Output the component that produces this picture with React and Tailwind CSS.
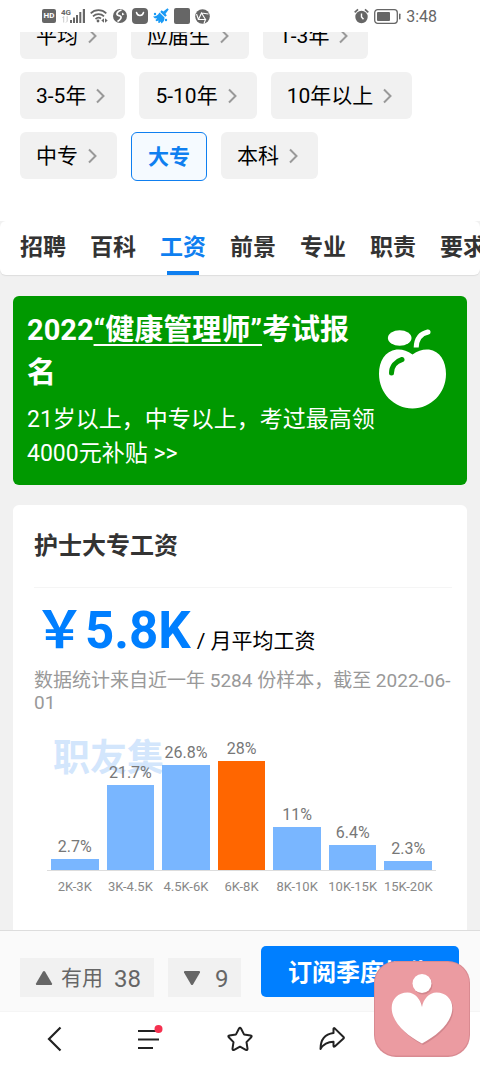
import React from "react";

const filters = [
  "平均",
  "应届生",
  "1-3年",
  "3-5年",
  "5-10年",
  "10年以上",
  "中专",
  "大专",
  "本科",
];
const activeFilter = "大专";

const tabs = ["招聘", "百科", "工资", "前景", "专业", "职责", "要求"];
const activeTab = "工资";

const salaries = [
  { range: "2K-3K", share: 2.7 },
  { range: "3K-4.5K", share: 21.7 },
  { range: "4.5K-6K", share: 26.8 },
  { range: "6K-8K", share: 28, top: true },
  { range: "8K-10K", share: 11 },
  { range: "10K-15K", share: 6.4 },
  { range: "15K-20K", share: 2.3 },
];

function StatusBar() {
  return (
    <header className="sticky top-0 z-20 flex h-8 shrink-0 items-center justify-between bg-white pl-[42px] pr-[43px] text-[#666]">
      <div className="flex items-center gap-[5px]">
        <span className="flex h-[14px] w-[14px] items-center justify-center rounded-[2px] bg-[#666] text-[8px] font-bold leading-none text-white">
          HD
        </span>
        <svg width="24" height="16" viewBox="0 0 24 16" fill="currentColor">
          <text x="0" y="7" fontSize="8" fontWeight="700" fontFamily="Roboto">4G</text>
          <path d="M1.500 10l1.200-1.500v6M5 14.500l1.200-1.300v-5" stroke="#bbb" strokeWidth="0.800" fill="none" />
          <path d="M9 12h2v3H9zM12 9.500h2V15h-2zM15 7h2v8h-2zM18.300 4h2v11h-2zM21.800 1H24v14h-2.200z" />
        </svg>
        <svg width="18" height="16" viewBox="0 0 18 16" fill="none" stroke="currentColor" strokeWidth="1.700">
          <path d="M.7 5.300C5 1 12 1 16.300 5.300M3 8.300c3-3 8-3 11 0M5.500 11c1.700-1.500 3.900-1.600 5.500-.5" />
          <circle cx="8" cy="13" r="1.400" fill="currentColor" stroke="none" />
          <path d="M14 10.300v4.400l-2.700-2.200zM15 10.300v4.400l2.700-2.200z" fill="currentColor" stroke="none" />
        </svg>
        <svg width="14" height="14" viewBox="0 0 14 14">
          <circle cx="7" cy="7" r="7" fill="currentColor" />
          <path d="M8.500 1C5 2 3.500 4 4 5.500s3.500.8 4 2.300c.4 1.500-1.200 3.300-3.500 4.600" fill="none" stroke="#fff" strokeWidth="1.700" />
          <path d="M9 3.500l2.500 1.800L9 6.500z" fill="#fff" />
        </svg>
        <svg width="16" height="16" viewBox="0 0 16 16">
          <rect x="0" y="0" width="16" height="16" rx="4" fill="currentColor" />
          <path d="M4.500 4.500c1 4 6 4 7 0" fill="none" stroke="#fff" strokeWidth="1.500" strokeLinecap="round" />
        </svg>
        <svg width="16" height="16" viewBox="0 0 16 16" fill="#1a9af5">
          <path d="M14.500.300l1.200 1.200-3.200 4.200 1.300 1.900-1.600 1.200-4.900-4.900 1.200-1.600 1.900 1.300zM6.500 4.600l5 5c.2 2.500-1 4.600-3 6l-1-2-1 1.500-1.500-.6.600-2-2.200.8-1-1.300 1.800-1.500-2.500-.2L0 8.500c2.500.2 5-.9 6.500-3.900z" />
          <circle cx="2" cy="6" r="1.200" />
          <circle cx="13" cy="12" r="1.200" />
        </svg>
        <span className="h-4 w-4 rounded-[2px] bg-[#666]" />
        <svg width="15" height="15" viewBox="0 0 15 15">
          <circle cx="7.500" cy="7.500" r="7.300" fill="currentColor" />
          <path d="M6.500 4l4 6.500H3.500zM6.500 4L13.500 5M3.500 10.500L1.500 5M10.500 10.500L9 14.500" fill="none" stroke="#fff" strokeWidth="1.100" />
        </svg>
      </div>
      <div className="flex items-center gap-[5px]">
        <svg width="15" height="16" viewBox="0 0 15 16" fill="none" stroke="currentColor">
          <circle cx="7.500" cy="9" r="6.200" fill="currentColor" stroke="none" />
          <path d="M.7 4.300L4 1.300M14.300 4.300L11 1.300" strokeWidth="1.700" />
          <path d="M7.500 5.500V9l2 2.300" stroke="#fff" strokeWidth="1.400" />
        </svg>
        <svg width="27" height="15" viewBox="0 0 27 15">
          <rect x=".7" y=".7" width="22.600" height="13.600" rx="3" fill="none" stroke="currentColor" strokeWidth="1.300" />
          <rect x="3" y="3" width="13" height="9" rx="1" fill="currentColor" />
          <rect x="25" y="4.500" width="1.500" height="6" rx=".7" fill="currentColor" />
        </svg>
        <span className="pt-[2px] text-[16px] leading-none">3:48</span>
      </div>
    </header>
  );
}

function Filters() {
  return (
    <section className="overflow-hidden bg-white">
      <div className="-mt-5 flex flex-wrap items-start gap-x-[14px] gap-y-[13px] px-5 pb-10">
        {filters.map((label) =>
          label === activeFilter ? (
            <button
              key={label}
              type="button"
              className="h-[49px] rounded-md border border-[#0f7ff0] bg-[#f5faff] px-4 pt-[2px] text-[21px] font-bold text-[#0f7ff0]"
            >
              {label}
            </button>
          ) : (
            <button
              key={label}
              type="button"
              className="flex h-[47px] items-center gap-[10px] rounded-md bg-[#f1f1f1] pl-4 pr-5 text-[21px] text-black"
            >
              <span className="pt-[2px]">{label}</span>
              <svg width="9" height="16" viewBox="0 0 9 16" fill="none" stroke="#999" strokeWidth="2">
                <path d="M1 1.500L7.500 8 1 14.500" />
              </svg>
            </button>
          )
        )}
      </div>
    </section>
  );
}

function Tabs() {
  return (
    <nav className="flex h-[54px] gap-6 overflow-hidden rounded-md bg-white pl-5 shadow-[0_1px_1px_#dddddd]">
      {tabs.map((label) => (
        <a
          key={label}
          href={"#" + label}
          className={
            label === activeTab
              ? "flex shrink-0 flex-col items-center justify-between pt-1 text-[23px] font-bold text-[#0f7ff0]"
              : "flex shrink-0 flex-col items-center justify-between pt-1 text-[23px] font-bold text-[#333]"
          }
        >
          <span className="leading-[46px]">{label}</span>
          {label === activeTab && <span className="h-1 w-8 shrink-0 bg-[#0f7ff0]" />}
        </a>
      ))}
    </nav>
  );
}

function Banner() {
  return (
    <a
      href="#exam"
      className="flex items-start gap-1 rounded-md bg-[#009900] pb-[14px] pl-[14px] pr-5 pt-[13px] text-white"
    >
      <div className="min-w-0 flex-1">
        <h2 className="text-[29px] font-bold leading-[43px]">
          2022<span className="underline decoration-2 underline-offset-4">“健康管理师”</span>考试报名
        </h2>
        <p className="mt-2 text-[23px] leading-[34px]">21岁以上，中专以上，考过最高领4000元补贴 &gt;&gt;</p>
      </div>
      <svg className="mt-5 shrink-0" width="68" height="80" viewBox="0 0 68 80" fill="none">
        <path
          d="M33.500 25.500C28 21.500 23 20 17.500 20.500C6 22 0 32 0 45C0 64 15 79.500 33.500 79.500S67 64 67 45C67 32 61 22 50 20.500C44 20 39 21.500 33.500 25.500Z"
          fill="#fff"
        />
        <ellipse cx="20.700" cy="9" rx="11.800" ry="7.800" fill="#fff" />
        <path d="M37.200 18.500C37.500 9.500 42 4.500 49 3" stroke="#fff" strokeWidth="5" />
        <circle cx="49" cy="3" r="2.500" fill="#fff" />
        <path d="M12.500 44C12.500 37.500 16.500 32.500 23 30.500" stroke="#009900" strokeWidth="5" strokeLinecap="round" />
      </svg>
    </a>
  );
}

function SalaryChart() {
  return (
    <figure className="relative ml-[13px] mr-4 mt-[23px]" aria-label="工资分布">
      <span className="absolute left-[6px] top-0 text-[37px] font-bold leading-[44px] text-[#d3e6fc]">职友集</span>
      <div className="relative flex h-[134px] items-end border-b border-[#dddddd]">
        {salaries.map(({ range, share, top }) => (
          <div key={range} className="flex flex-1 flex-col items-stretch px-1">
            <span className="text-center text-[16px] leading-6 text-[#777]">
              <span className="-mx-2 block">{share}%</span>
            </span>
            <div className={top ? "bg-[#ff6600]" : "bg-[#79b6ff]"} style={{ height: Math.round(share * 3.9) }} />
          </div>
        ))}
      </div>
      <figcaption className="flex pt-[6px] text-[13px] leading-5 text-[#888]">
        {salaries.map(({ range }) => (
          <span key={range} className="flex-1 whitespace-nowrap text-center">
            {range}
          </span>
        ))}
      </figcaption>
    </figure>
  );
}

function SalaryCard() {
  return (
    <section className="flex-1 rounded-t-md bg-white pb-4 pl-[21px] pr-[15px]">
      <h2 className="border-b border-[#f5f5f5] pb-[23px] pt-[23px] text-[24px] font-bold leading-9 text-[#333]">
        护士大专工资
      </h2>
      <p className="flex items-baseline gap-[6px] pt-[14px] leading-[58px]">
        <strong className="text-[51px] font-bold text-[#007fff]">￥5.8K</strong>
        <span className="text-[21px] text-black">/ 月平均工资</span>
      </p>
      <p className="text-[19px] leading-[22px] text-[#999]">
        数据统计来自近一年 5284 份样本，截至 2022-06-01
      </p>
      <SalaryChart />
    </section>
  );
}

function ActionBar() {
  return (
    <div className="flex h-[81px] items-end border-t border-[#dddddd] bg-[#fafafa] pb-[14px] pl-5 pr-[21px]">
      <button type="button" className="flex h-[39px] w-[134px] items-center bg-[#f1f1f1] pl-[15px] text-[#666]">
        <svg width="18" height="16" viewBox="0 0 18 16" fill="currentColor">
          <path d="M8 1.600q1-1.200 2 0l7 11.900q.6 1.500-1 1.500H2q-1.600 0-1-1.500z" />
        </svg>
        <span className="ml-2 pt-[2px] text-[21px] leading-none">有用</span>
        <span className="ml-[11px] pt-[2px] text-[24px] leading-none">38</span>
      </button>
      <button
        type="button"
        aria-label="没用 9"
        className="ml-[14px] flex h-[39px] w-[73px] items-center bg-[#f1f1f1] pl-[15px] text-[#666]"
      >
        <svg width="18" height="16" viewBox="0 0 18 16" fill="currentColor">
          <path d="M8 14.400q1 1.200 2 0l7-11.900q.6-1.500-1-1.500H2Q.4 1 1 2.500z" />
        </svg>
        <span className="ml-[14px] pt-[2px] text-[24px] leading-none">9</span>
      </button>
      <button
        type="button"
        className="ml-5 h-[51px] flex-1 rounded-[5px] bg-[#007fff] pt-[2px] text-[24px] font-bold text-white"
      >
        订阅季度报告
      </button>
    </div>
  );
}

function BrowserNav() {
  const item = "flex flex-1 items-center justify-center";
  return (
    <nav className="flex h-14 border-t border-[#f5f5f5] bg-white px-[9px] pb-[2px] text-[#222]">
      <button type="button" aria-label="返回" className={item}>
        <svg width="26" height="26" viewBox="0 0 26 26" fill="none" stroke="currentColor" strokeWidth="2.200">
          <path d="M18.500 1.500L7 13l11.500 11.500" />
        </svg>
      </button>
      <button type="button" aria-label="菜单" className={item}>
        <svg width="30" height="28" viewBox="-2 0 30 28" fill="none" stroke="currentColor" strokeWidth="2">
          <path d="M3 6h21M3 14.500h21M3 23h15" />
          <circle cx="23.500" cy="4" r="4" fill="#f5304f" stroke="none" />
        </svg>
      </button>
      <button type="button" aria-label="收藏" className={item}>
        <svg width="26" height="26" viewBox="0 0 26 26" fill="none" stroke="currentColor" strokeWidth="2" strokeLinejoin="round">
          <path d="M12 2.500q1-1.500 2 0l3 5.900 6.600 1q1.800.5.600 1.900l-4.700 4.800 1 6.600q0 1.800-1.700 1.100L13 20.700l-5.800 3.100q-1.700.7-1.700-1.100l1-6.600-4.700-4.800Q.6 9.900 2.400 9.400l6.600-1z" />
        </svg>
      </button>
      <button type="button" aria-label="分享" className={item}>
        <svg width="26" height="26" viewBox="0 0 26 26" fill="none" stroke="currentColor" strokeWidth="2" strokeLinejoin="round">
          <path d="M14.500 2.700q.2-1 1.200-.3L24.500 11q.7.800 0 1.600l-8.800 7.900q-1 .6-1.200-.4v-4.300C8.500 15.800 4.500 18 1.500 23C1.500 14.500 5.500 8.200 14.500 7z" />
        </svg>
      </button>
      <button type="button" aria-label="主页" className={item} />
    </nav>
  );
}

function FloatingApp() {
  return (
    <button type="button" aria-label="爱心助手" className="absolute bottom-[10px] right-[10px]">
      <svg width="96" height="96" viewBox="0 0 96 96">
        <rect x="0" y="0" width="96" height="96" rx="22" fill="#d98a91" />
        <rect x="1" y="1" width="94" height="93.500" rx="21" fill="#eb9ba1" />
        <g fill="#d2868d" transform="translate(1 1.500)">
          <circle cx="48" cy="22.500" r="9.500" />
          <path d="M48 46C46.500 38 41 31.500 33.500 31.500C24 31.500 17.700 38 17.700 47C17.700 61 32 74 48 82.500C64 74 78.300 61 78.300 47C78.300 38 72 31.500 62.500 31.500C55 31.500 49.500 38 48 46Z" />
        </g>
        <g fill="#fff">
          <circle cx="48" cy="22.500" r="9.500" />
          <path d="M48 46C46.500 38 41 31.500 33.500 31.500C24 31.500 17.700 38 17.700 47C17.700 61 32 74 48 82.500C64 74 78.300 61 78.300 47C78.300 38 72 31.500 62.500 31.500C55 31.500 49.500 38 48 46Z" />
        </g>
      </svg>
    </button>
  );
}

export default function App() {
  return (
    <div className="flex min-h-screen flex-col bg-[#f1f1f1] font-['Roboto','Noto_Sans_CJK_SC',sans-serif]">
      <StatusBar />
      <Filters />
      <Tabs />
      <main className="flex flex-1 flex-col gap-5 px-[13px] pt-[21px]">
        <Banner />
        <SalaryCard />
      </main>
      <footer className="sticky bottom-0 z-10">
        <ActionBar />
        <BrowserNav />
        <FloatingApp />
      </footer>
    </div>
  );
}
